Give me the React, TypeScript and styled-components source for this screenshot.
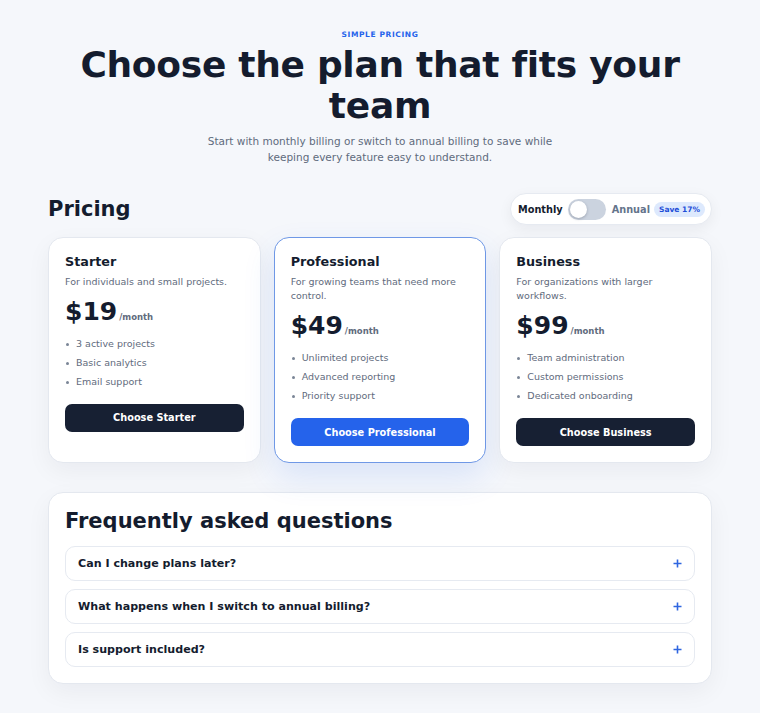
import React, { useState } from "react";
import styled, { createGlobalStyle, css } from "styled-components";

const GlobalStyle = createGlobalStyle`
  *, *::before, *::after { box-sizing: border-box; }
  html, body { margin: 0; padding: 0; }
  body {
    background: #f5f7fb;
    color: #141c2e;
    font-family: "DejaVu Sans", "Liberation Sans", sans-serif;
    -webkit-font-smoothing: antialiased;
  }
  button { font-family: inherit; }
`;

const Page = styled.main`
  max-width: 664px;
  margin: 0 auto;
  padding: 29px 0 40px;
`;

const Hero = styled.header`
  display: flex;
  flex-direction: column;
  align-items: center;
  text-align: center;
`;

const Eyebrow = styled.span`
  font-size: 7.5px;
  line-height: 11px;
  font-weight: 700;
  letter-spacing: 0.08em;
  text-transform: uppercase;
  color: #2563eb;
`;

const Title = styled.h1`
  margin: 4px 0 0;
  font-size: 36px;
  line-height: 1.15;
  font-weight: 700;
  letter-spacing: -0.008em;
  color: #141c2e;
`;

const Lead = styled.p`
  margin: 7px 0 0;
  max-width: 360px;
  font-size: 10.5px;
  line-height: 1.5;
  color: #5f6b7d;
`;

const SectionBar = styled.div`
  margin-top: 28px;
  display: flex;
  align-items: center;
  justify-content: space-between;
`;

const SectionTitle = styled.h2`
  margin: 0;
  font-size: 21px;
  line-height: 1.2;
  font-weight: 700;
  color: #141c2e;
`;

const BillingToggle = styled.div`
  display: flex;
  align-items: center;
  height: 32px;
  padding: 0 6px 0 7px;
  background: #ffffff;
  border: 1px solid #e6eaf1;
  border-radius: 999px;
  box-shadow: 0 4px 14px rgba(15, 23, 42, 0.06);
`;

const BillingLabel = styled.span<{ $active: boolean }>`
  font-size: 9.75px;
  font-weight: 700;
  color: ${(p) => (p.$active ? "#141c2e" : "#64748b")};
`;

const Switch = styled.button<{ $on: boolean }>`
  position: relative;
  width: 38px;
  height: 21px;
  margin: 0 6px 0 5px;
  padding: 0;
  border: none;
  border-radius: 999px;
  background: ${(p) => (p.$on ? "#2563eb" : "#cbd3df")};
  cursor: pointer;

  &::after {
    content: "";
    position: absolute;
    top: 2px;
    left: ${(p) => (p.$on ? "19px" : "2px")};
    width: 17px;
    height: 17px;
    border-radius: 50%;
    background: #ffffff;
    box-shadow: 0 1px 3px rgba(15, 23, 42, 0.25);
    transition: left 0.15s ease;
  }
`;

const SaveBadge = styled.span`
  margin-left: 4px;
  padding: 2px 5px;
  border-radius: 999px;
  background: #dde9fd;
  color: #1d4ed8;
  font-size: 7.5px;
  font-weight: 700;
  line-height: 11px;
`;

const PlanGrid = styled.div`
  margin-top: 12px;
  display: grid;
  grid-template-columns: repeat(3, 1fr);
  gap: 13px;
`;

const PlanCard = styled.article<{ $featured?: boolean }>`
  display: flex;
  flex-direction: column;
  padding: 16px;
  background: #ffffff;
  border: 1px solid #e4e8ef;
  border-radius: 15px;
  box-shadow: 0 8px 24px rgba(15, 23, 42, 0.05);

  ${(p) =>
    p.$featured &&
    css`
      border-color: #6f98e6;
      box-shadow: 0 14px 32px rgba(37, 99, 235, 0.13);
    `}
`;

const PlanName = styled.h3`
  margin: 0;
  font-size: 12.75px;
  line-height: 1.3;
  font-weight: 700;
  color: #141c2e;
`;

const PlanBlurb = styled.p`
  margin: 4px 0 0;
  font-size: 9.5px;
  line-height: 1.5;
  color: #5f6b7d;
`;

const PriceRow = styled.div`
  margin-top: 9px;
  display: flex;
  align-items: baseline;
  gap: 2px;
`;

const Amount = styled.span`
  font-size: 25px;
  line-height: 1.1;
  font-weight: 700;
  color: #141c2e;
`;

const Period = styled.span`
  font-size: 8.5px;
  font-weight: 700;
  color: #5f6b7d;
`;

const Features = styled.ul`
  margin: 11px 0 0;
  padding: 0;
  list-style: none;
  display: flex;
  flex-direction: column;
  gap: 4.75px;
`;

const Feature = styled.li`
  position: relative;
  padding-left: 11px;
  font-size: 9.5px;
  line-height: 1.5;
  color: #5f6b7d;

  &::before {
    content: "";
    position: absolute;
    left: 1px;
    top: 6px;
    width: 3px;
    height: 3px;
    border-radius: 50%;
    background: #7a8596;
  }
`;

const PlanButton = styled.button<{ $primary?: boolean }>`
  margin-top: 15px;
  height: 28px;
  width: 100%;
  border: none;
  border-radius: 7px;
  background: ${(p) => (p.$primary ? "#2563eb" : "#172033")};
  color: #ffffff;
  font-size: 9.75px;
  font-weight: 700;
  cursor: pointer;
`;

const FaqCard = styled.section`
  margin-top: 29px;
  padding: 16px;
  background: #ffffff;
  border: 1px solid #e4e8ef;
  border-radius: 15px;
  box-shadow: 0 8px 24px rgba(15, 23, 42, 0.05);
`;

const FaqTitle = styled.h2`
  margin: 0 0 12px;
  font-size: 21px;
  line-height: 1.2;
  font-weight: 700;
  color: #141c2e;
`;

const FaqList = styled.div`
  display: flex;
  flex-direction: column;
  gap: 8px;
`;

const FaqItem = styled.button`
  display: flex;
  align-items: center;
  justify-content: space-between;
  height: 35px;
  width: 100%;
  padding: 0 12px;
  background: #ffffff;
  border: 1px solid #e6eaf1;
  border-radius: 10px;
  text-align: left;
  font-size: 11.1px;
  font-weight: 700;
  color: #141c2e;
  cursor: pointer;
`;

const PlusIcon = () => (
  <svg width="9" height="9" viewBox="0 0 9 9" aria-hidden="true">
    <path d="M4.5 0.5v8M0.5 4.5h8" stroke="#2f66e0" strokeWidth="1.6" fill="none" />
  </svg>
);

type Plan = {
  name: string;
  blurb: string;
  monthly: number;
  annual: number;
  features: string[];
  featured?: boolean;
};

const plans: Plan[] = [
  {
    name: "Starter",
    blurb: "For individuals and small projects.",
    monthly: 19,
    annual: 190,
    features: ["3 active projects", "Basic analytics", "Email support"],
  },
  {
    name: "Professional",
    blurb: "For growing teams that need more control.",
    monthly: 49,
    annual: 490,
    features: ["Unlimited projects", "Advanced reporting", "Priority support"],
    featured: true,
  },
  {
    name: "Business",
    blurb: "For organizations with larger workflows.",
    monthly: 99,
    annual: 990,
    features: ["Team administration", "Custom permissions", "Dedicated onboarding"],
  },
];

const questions = [
  "Can I change plans later?",
  "What happens when I switch to annual billing?",
  "Is support included?",
];

export default function App() {
  const [annual, setAnnual] = useState(false);

  return (
    <>
      <GlobalStyle />
      <Page>
        <Hero>
          <Eyebrow>Simple pricing</Eyebrow>
          <Title>Choose the plan that fits your team</Title>
          <Lead>
            Start with monthly billing or switch to annual billing to save while keeping every
            feature easy to understand.
          </Lead>
        </Hero>

        <SectionBar>
          <SectionTitle>Pricing</SectionTitle>
          <BillingToggle>
            <BillingLabel $active={!annual}>Monthly</BillingLabel>
            <Switch
              role="switch"
              aria-checked={annual}
              aria-label="Annual billing"
              $on={annual}
              onClick={() => setAnnual((v) => !v)}
            />
            <BillingLabel $active={annual}>Annual</BillingLabel>
            <SaveBadge>Save 17%</SaveBadge>
          </BillingToggle>
        </SectionBar>

        <PlanGrid>
          {plans.map((plan) => (
            <PlanCard key={plan.name} $featured={plan.featured}>
              <PlanName>{plan.name}</PlanName>
              <PlanBlurb>{plan.blurb}</PlanBlurb>
              <PriceRow>
                <Amount>${annual ? plan.annual : plan.monthly}</Amount>
                <Period>{annual ? "/year" : "/month"}</Period>
              </PriceRow>
              <Features>
                {plan.features.map((f) => (
                  <Feature key={f}>{f}</Feature>
                ))}
              </Features>
              <PlanButton $primary={plan.featured}>Choose {plan.name}</PlanButton>
            </PlanCard>
          ))}
        </PlanGrid>

        <FaqCard>
          <FaqTitle>Frequently asked questions</FaqTitle>
          <FaqList>
            {questions.map((q) => (
              <FaqItem key={q}>
                <span>{q}</span>
                <PlusIcon />
              </FaqItem>
            ))}
          </FaqList>
        </FaqCard>
      </Page>
    </>
  );
}
